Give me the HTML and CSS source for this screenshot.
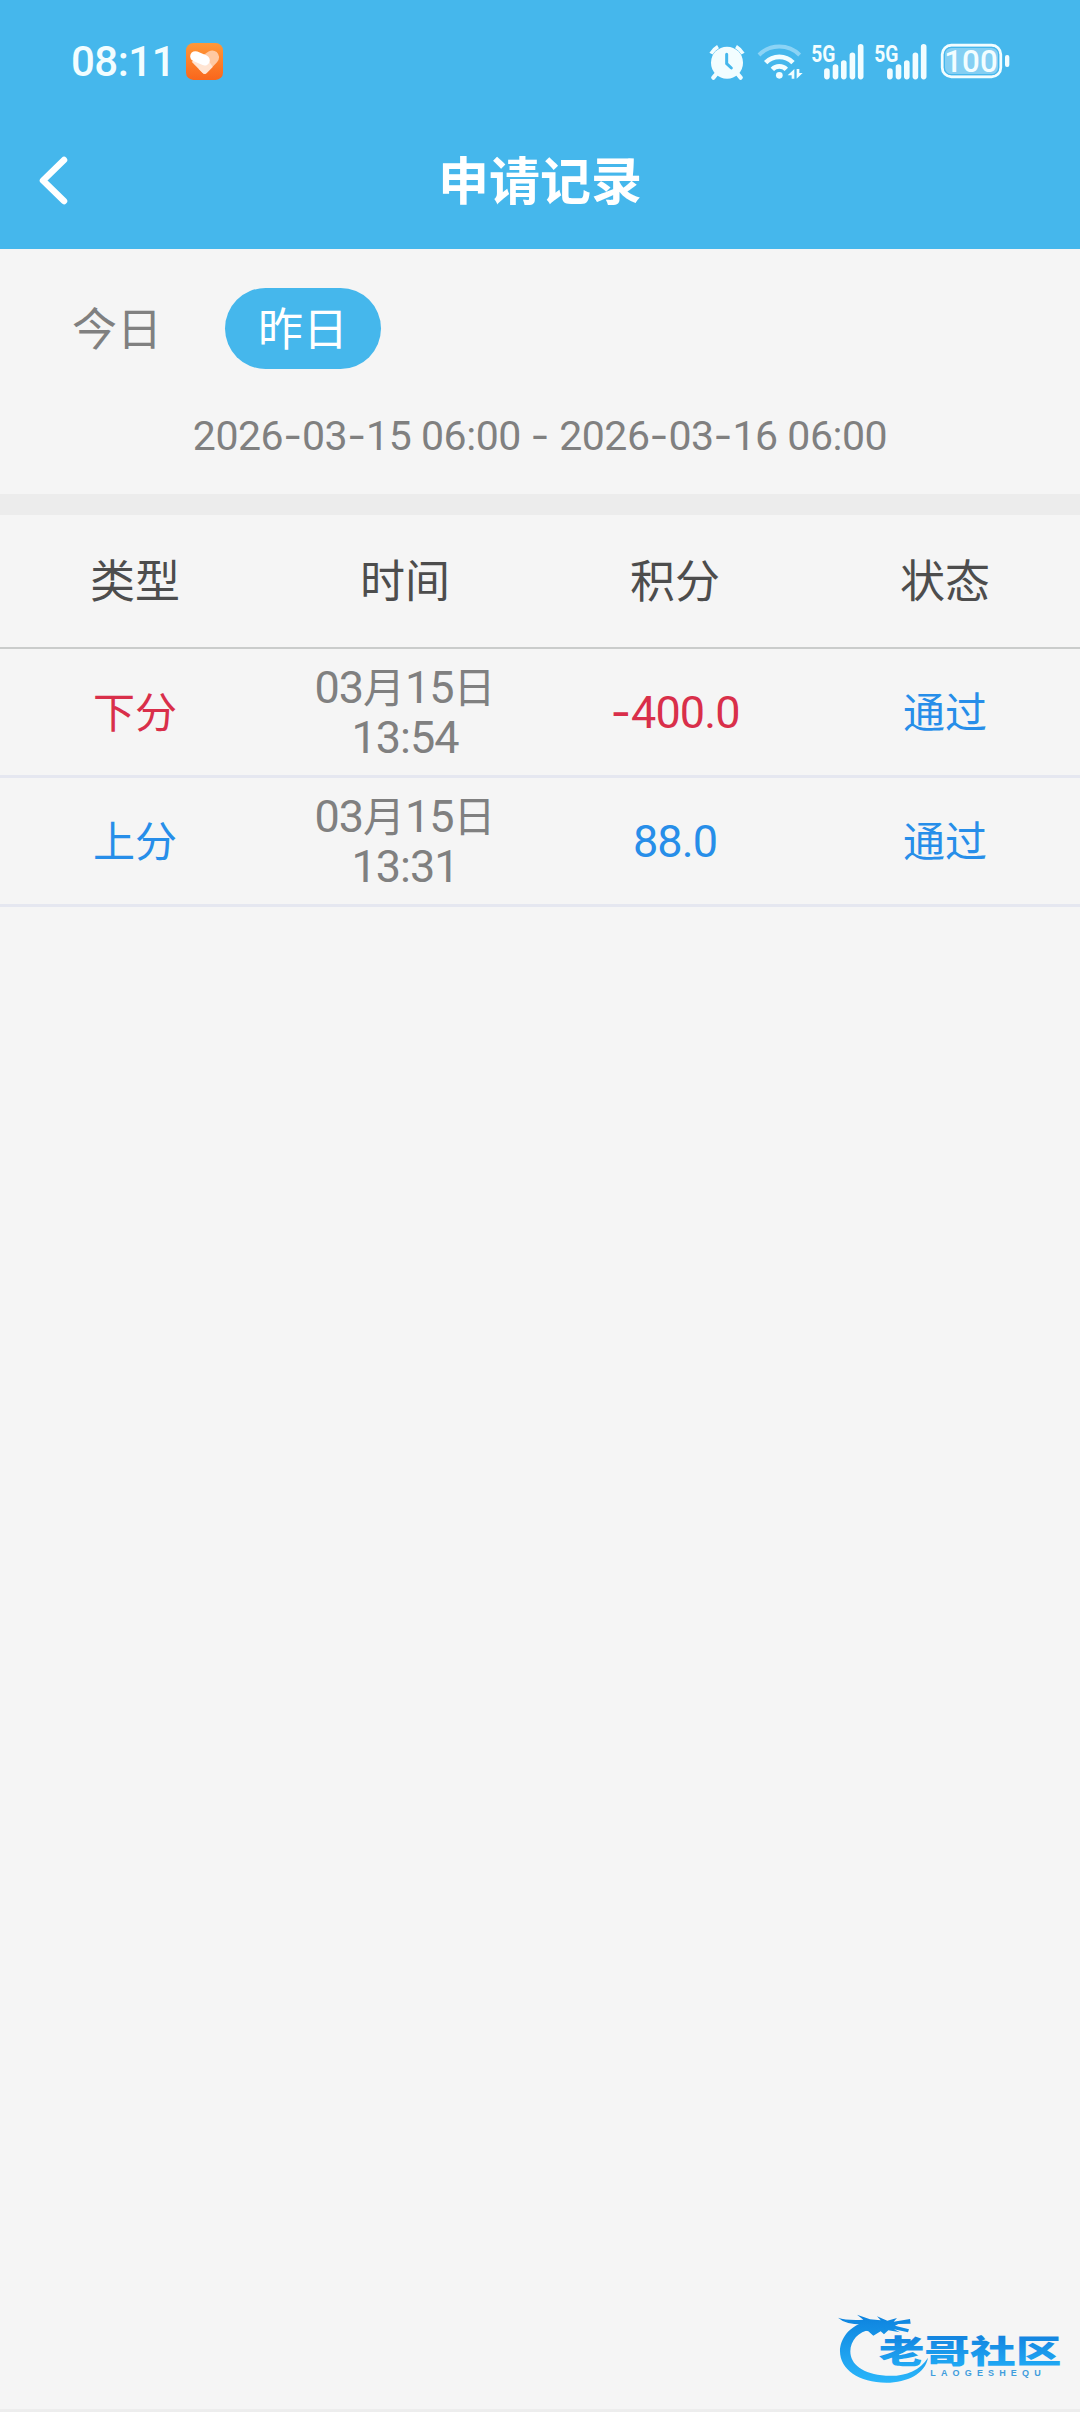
FILE: index.html
```html
<!DOCTYPE html>
<html lang="zh-CN">
<head>
    <meta charset="UTF-8">
    <meta name="viewport" content="width=device-width, initial-scale=1.0">
    <title>申请记录</title>
    <link rel="stylesheet" href="styles.css">
</head>
<body>
    <header class="header">
        <div class="status-bar">
            <span class="clock">08:11</span>
            <svg class="heart-icon" viewBox="0 0 111 111">
                <defs>
                    <linearGradient id="orange" x1="0" y1="0" x2="0" y2="1">
                        <stop offset="0" stop-color="#ff9838"/>
                        <stop offset="1" stop-color="#f9661c"/>
                    </linearGradient>
                </defs>
                <rect width="111" height="111" rx="22" fill="url(#orange)"/>
                <path d="M56 34Q76 15 92 27Q106 41 93 58L62 90Q56 96 50 90L38 78L56 58Z" fill="#ffc9a2"/>
                <path d="M17 56L50 90Q56 96 62 90L80 72L56 34Z" fill="#ffe4d2"/>
                <path d="M28 40L56 52" stroke="#fff" stroke-width="31" stroke-linecap="round"/>
            </svg>
            <div class="status-icons">
                <svg class="alarm-icon" viewBox="56 72 108 108">
                    <path d="M62 101A60 60 0 0 1 83 80M137 80A60 60 0 0 1 158 101" fill="none" stroke="#f2fdff" stroke-width="11"/>
                    <path d="M78 162L69 173M142 162L151 173" stroke="#f2fdff" stroke-width="13" stroke-linecap="round"/>
                    <circle cx="110" cy="128" r="48" fill="#f2fdff"/>
                    <path d="M109 103V131L123 144" fill="none" stroke="#45b7ec" stroke-width="9" stroke-linecap="round"/>
                </svg>
                <svg class="wifi-icon" viewBox="200 69 138 111">
                    <g fill="none" stroke-width="14">
                        <path d="M206 105A86 86 0 0 1 328 105" stroke="#8bd3f5" stroke-width="12"/>
                        <path d="M226 128A57 57 0 0 1 308 128" stroke="#f2fdff"/>
                        <path d="M246 148A29 29 0 0 1 288 148" stroke="#f2fdff"/>
                    </g>
                    <circle cx="267" cy="166" r="10" fill="#f2fdff"/>
                    <path d="M312 176V147L292 166H304V176ZM319 147V176L337 159H327V147Z" fill="#f2fdff"/>
                </svg>
                <svg class="signal-icon" viewBox="363 69 160 111">
                    <text x="364" y="125" class="network" textLength="73" lengthAdjust="spacingAndGlyphs">5G</text>
                    <path d="M411 153V170M437 141V170M462 129V170M488 106V170M513 80V170" stroke="#f2fdff" stroke-width="17" stroke-linecap="round"/>
                </svg>
                <svg class="signal-icon" viewBox="363 69 160 111">
                    <text x="364" y="125" class="network" textLength="73" lengthAdjust="spacingAndGlyphs">5G</text>
                    <path d="M411 153V170M437 141V170M462 129V170M488 106V170M513 80V170" stroke="#f2fdff" stroke-width="17" stroke-linecap="round"/>
                </svg>
                <svg class="battery-icon" viewBox="750 69 210 111">
                    <rect x="757" y="76" width="175" height="94" rx="27" fill="#84cff3" stroke="#f2fdff" stroke-width="9"/>
                    <rect x="763" y="82" width="163" height="82" rx="21" fill="none" stroke="#45b7ec" stroke-width="4"/>
                    <rect x="945" y="105" width="13" height="36" rx="6" fill="#f2fdff"/>
                    <text x="763" y="156" class="percent" textLength="160" lengthAdjust="spacingAndGlyphs">100</text>
                </svg>
            </div>
        </div>
        <div class="nav-bar">
            <svg class="back-icon" viewBox="0 0 30 52">
                <path d="M25 6L4 26.500L25 47" fill="none" stroke="#fff" stroke-width="6.500" stroke-linecap="round" stroke-linejoin="round"/>
            </svg>
            <h1 class="title">申请记录</h1>
        </div>
    </header>

    <main>
        <div class="tabs">
            <a class="tab">今日</a>
            <a class="tab active">昨日</a>
        </div>
        <p class="range">2026<i>-</i>03<i>-</i>15 06:00 <i>-</i> 2026<i>-</i>03<i>-</i>16 06:00</p>

        <div class="records">
            <div class="row head">
                <div>类型</div>
                <div>时间</div>
                <div>积分</div>
                <div>状态</div>
            </div>
            <div class="row">
                <div class="red">下分</div>
                <div class="time">03<b>月</b>15<b>日</b><br>13:54</div>
                <div class="red num"><i>-</i>400.0</div>
                <div class="blue">通过</div>
            </div>
            <div class="row">
                <div class="blue">上分</div>
                <div class="time">03<b>月</b>15<b>日</b><br>13:31</div>
                <div class="blue num">88.0</div>
                <div class="blue">通过</div>
            </div>
        </div>
    </main>

    <footer class="home-edge"></footer>

    <svg class="watermark" viewBox="0 0 780 366">
        <defs>
            <linearGradient id="wave" gradientUnits="userSpaceOnUse" x1="0" y1="80" x2="0" y2="275">
                <stop offset="0" stop-color="#0e84df"/>
                <stop offset="1" stop-color="#29b5fa"/>
            </linearGradient>
            <linearGradient id="word" gradientUnits="userSpaceOnUse" x1="0" y1="140" x2="0" y2="228">
                <stop offset="0" stop-color="#1485e0"/>
                <stop offset="1" stop-color="#20a9f4"/>
            </linearGradient>
        </defs>
        <g fill="url(#wave)">
            <path d="M145 92C87 106 60 146 60 184C60 238 116 278 199 278C262 278 316 250 324 203C299 244 249 261 198 257C128 253 91 223 91 184C91 151 116 124 151 119Z"/>
            <path d="M54 83Q80 92 130 89L111 74L150 88L182 91L171 79L202 92L231 84L221 95L270 87L272 101L235 102L225 107L267 118L264 127L222 118L240 127L205 121L192 133L182 124L160 137L145 124L118 118L135 103Q78 105 54 83Z"/>
        </g>
        <text x="176" y="220" class="brand" textLength="548" lengthAdjust="spacingAndGlyphs">老哥社区</text>
        <text x="331" y="257" class="brand-en" textLength="331">LAOGESHEQU</text>
    </svg>
</body>
</html>
```

FILE: styles.css
```css
* {
    box-sizing: border-box;
}
body {
    margin: 0;
    min-height: 2412px;
    display: flex;
    flex-direction: column;
    position: relative;
    background-color: #f5f5f5;
    color: #808080;
    font-family: Roboto, "Noto Sans CJK SC", sans-serif;
}
main {
    flex: 1;
}
i {
    font-family: Inter, sans-serif;
    font-style: normal;
    letter-spacing: 0;
}
.header {
    height: 249px;
    background-color: #45b7ec;
    color: #fff;
}
.status-bar {
    height: 123px;
    padding: 0 70px 0 71px;
    display: flex;
    align-items: center;
}
.clock {
    font-size: 42px;
    font-weight: 500;
    color: #f2fdff;
    width: 115px;
    letter-spacing: -0.5px;
}
.heart-icon {
    width: 37px;
    height: 37px;
}
.status-icons {
    display: flex;
    align-items: center;
    margin-left: auto;
}
.status-icons svg {
    height: 37px;
    overflow: visible;
}
.status-icons .alarm-icon {
    width: 36px;
    height: 36px;
    margin-right: 12px;
}
.wifi-icon {
    width: 46px;
    margin-right: 8px;
}
.signal-icon {
    width: 53px;
    margin-right: 10px;
}
.battery-icon {
    width: 70px;
    margin-left: 3px;
}
.network {
    font: 700 73px Roboto, sans-serif;
    fill: #f2fdff;
}
.percent {
    font: 500 96px Roboto, sans-serif;
    fill: #f2fdff;
}
.nav-bar {
    height: 114px;
    padding: 0 39px;
    display: flex;
    align-items: center;
}
.back-icon {
    width: 30px;
    height: 52px;
}
.title {
    flex: 1;
    margin: 0 30px 0 0;
    padding-bottom: 3px;
    text-align: center;
    font: 700 51px/1 "Noto Sans CJK SC", sans-serif;
}
.tabs {
    display: flex;
    gap: 30px;
    padding: 39px 37px 0 39px;
}
.tab {
    height: 81px;
    padding: 0 33px;
    border-radius: 41px;
    font-size: 45px;
    line-height: 85px;
}
.tab.active {
    background-color: #45b7ec;
    color: #fff;
}
.range {
    height: 125px;
    margin: 0;
    text-align: center;
    font-size: 41px;
    letter-spacing: -0.45px;
    line-height: 132px;
}
.records {
    border-top: 21px solid #ececec;
}
.row {
    display: grid;
    grid-template-columns: repeat(4, 1fr);
    align-items: center;
    height: 129px;
    border-bottom: 3px solid #e5e7f0;
    text-align: center;
    font-size: 42px;
    line-height: 54px;
}
.row > div {
    padding-top: 3px;
}
.head {
    height: 134px;
    border-bottom: 2px solid #cacccb;
    font-size: 45px;
    color: #4d4d4d;
}
.row > .time {
    padding-top: 1px;
    font-size: 45px;
    line-height: 50px;
    letter-spacing: -1px;
}
.time b {
    font-weight: 400;
    font-size: 42px;
    line-height: 1;
    letter-spacing: 0;
}
.row > .num {
    padding-top: 1px;
    font-size: 45px;
    letter-spacing: -0.9px;
}
.red {
    color: #d92f4a;
}
.blue {
    color: #278ee9;
}
.home-edge {
    height: 3px;
    background-color: #ededed;
}
.watermark {
    position: absolute;
    right: 0;
    bottom: 0;
    width: 260px;
    height: 122px;
}
.brand {
    font: 900 97px "Noto Sans CJK SC", sans-serif;
    fill: url(#word);
}
.brand-en {
    font: 700 27px "Liberation Sans", sans-serif;
    fill: #3f9ddd;
}
```
